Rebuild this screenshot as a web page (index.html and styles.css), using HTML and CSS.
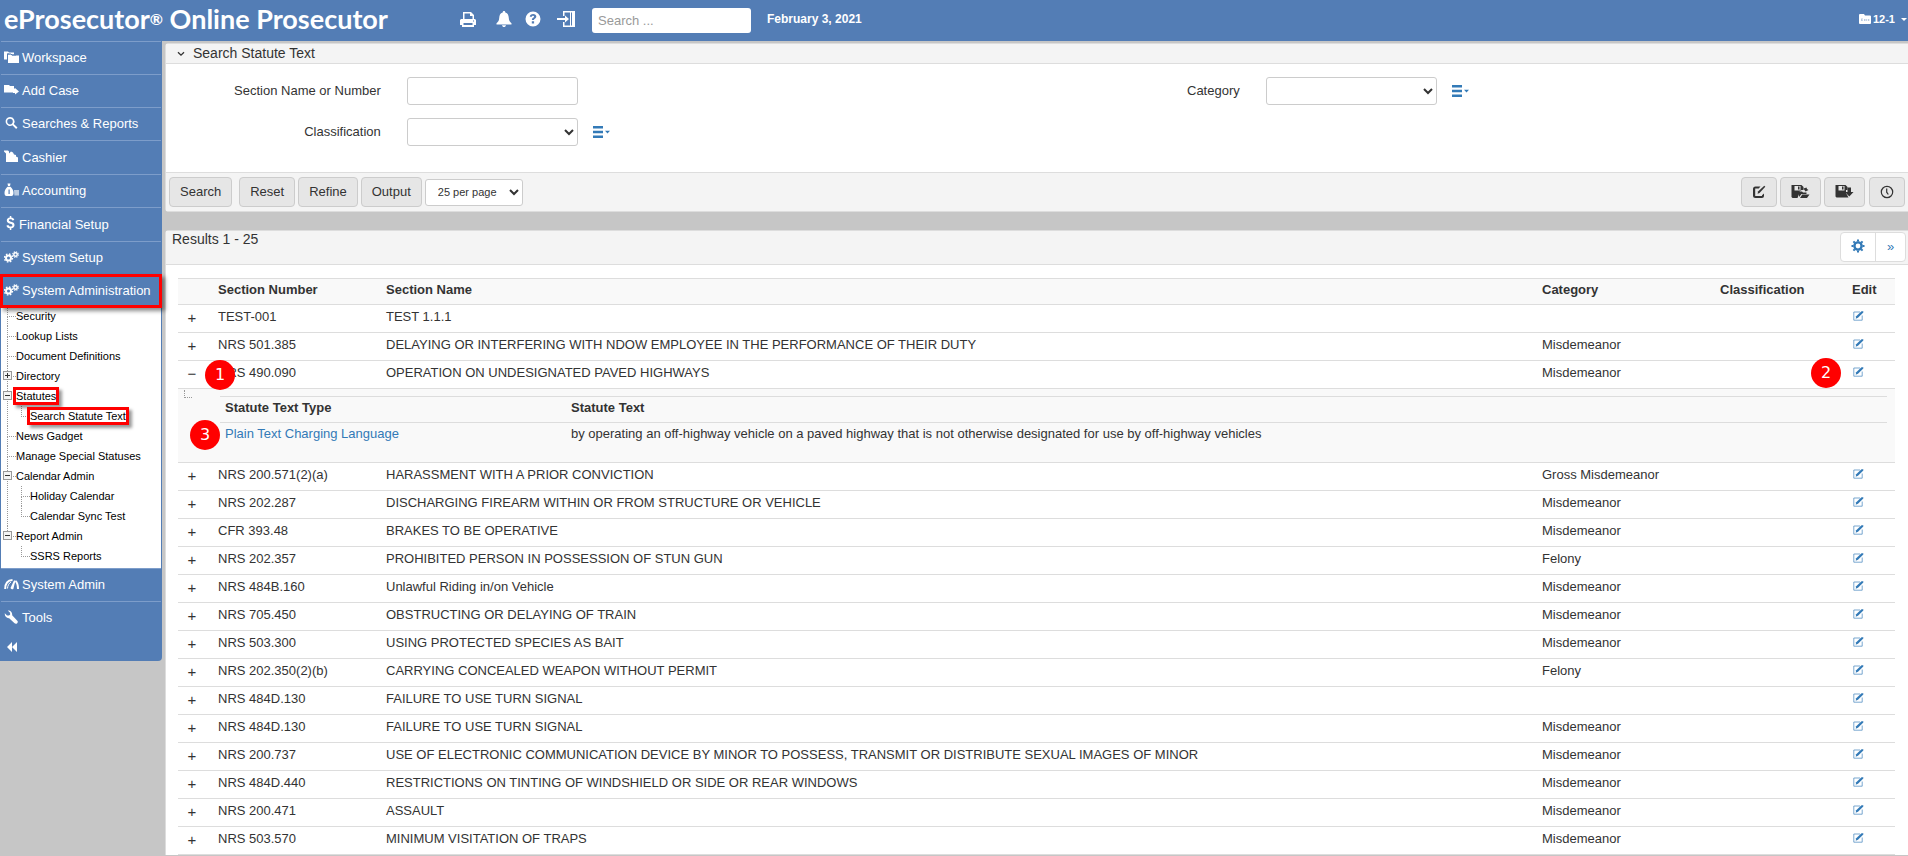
FILE: index.html
```html
<!DOCTYPE html>
<html lang="en">
<head>
<meta charset="utf-8">
<title>eProsecutor Online Prosecutor</title>
<link rel="stylesheet" href="styles.css">
</head>
<body>
<svg class="sprite" aria-hidden="true">
  <symbol id="i-print" viewBox="0 0 16 16"><path fill-rule="evenodd" d="M3 1h8l3 3v4h1l1 1v5h-2v2H2v-2H0V9l1-1h2zM4.500 2.500V8h8V5H10V2.500zM3.500 12v2h9v-2zM13 9.500v1h1v-1z"/></symbol>
  <symbol id="i-bell" viewBox="0 0 16 16"><path d="M8 0c1 0 1.300.7 1.300 1.400C12 2 12.600 4.500 12.800 7c.2 3 1.200 4 2.700 5.200V13.500H.5V12.200C2 11 3 10 3.200 7 3.400 4.500 4 2 6.700 1.400 6.700.7 7 0 8 0zM6 14.200h4C9.800 15.400 9 16 8 16s-1.800-.6-2-1.800z"/></symbol>
  <symbol id="i-help" viewBox="0 0 16 16"><path fill-rule="evenodd" d="M8 .5a7.500 7.500 0 1 1 0 15 7.500 7.500 0 0 1 0-15zM4.800 5.800h2.100c.1-.8.500-1.100 1.200-1.100.6 0 1 .3 1 .8 0 .6-.4.900-1 1.300-.8.5-1.200 1-1.200 2.200h2.100c0-.6.300-.9.900-1.300.8-.5 1.400-1.100 1.400-2.200C11.300 3.900 10 3 8.200 3 6.200 3 4.900 4 4.800 5.800zM6.800 10.200v2.200h2.300v-2.200z"/></symbol>
  <symbol id="i-login" viewBox="0 0 18 16"><path d="M6 0h12v16H6v-5h1.500v3.500H13l-.01-13H7.500V5H6zM0 7h8V4.500L12 8l-4 3.500V9H0z"/><path class="knock" d="M14 1.500h1v13h-1z"/></symbol>
  <symbol id="i-casefolder" viewBox="0 0 12 10"><path d="M0 1q0-1 1-1h4l1 1.500h5q1 0 1 1V9q0 1-1 1H1q-1 0-1-1z"/><path class="knock" d="M2 4.500h2v1H3v.7h1V7H2zM5 5h1.500v2H5zM7.200 5h1v2h-1zM9 5h1.300v2H9z" opacity=".4"/></symbol>
  <symbol id="i-folders" viewBox="0 0 15 13"><path d="M0 1h4l1 1h5v2H6L5 3H3v6H0z"/><path d="M4 4h3l1 1h7v7.500H4z" /><path d="M3.500 9V3.500H7L8 4.500h4" fill="none" class="knock-line"/></symbol>
  <symbol id="i-addcase" viewBox="0 0 15 12"><path d="M0 1h5l1 1h4v3l1-1 4 3.500-4 3V9H9v-.5H0z"/></symbol>
  <symbol id="i-search" viewBox="0 0 14 14"><path fill-rule="evenodd" d="M5.500 1a4.500 4.500 0 0 1 3.800 7l3.700 3.600-1.400 1.400L8 9.300A4.500 4.500 0 1 1 5.500 1zm0 1.800a2.800 2.800 0 1 0 0 5.600 2.800 2.800 0 0 0 0-5.600z"/></symbol>
  <symbol id="i-cashier" viewBox="0 0 15 13"><path d="M0 1h4l1 1v2l2-2 2 1 1 2 2 .5V7l2 1v4.500H2V4L0 2z"/></symbol>
  <symbol id="i-money" viewBox="0 0 15 13"><path fill-rule="evenodd" d="M3.500 0h3L6 2.500h-2zM3.500 3.200h3C8.500 5 9.500 7 9.500 9.500c0 2-.8 3-2 3h-5c-1.300 0-2-1-2-3C.5 7 1.500 5 3.500 3.200zM4.500 6v4.500h1.200V6z"/><path d="M10 6.500h5V12h-4.600z" opacity=".6"/></symbol>
  <symbol id="i-dollar" viewBox="0 0 10 14"><path d="M4.300 0h1.500v1.500c1.600.2 2.700 1 3 2.500l-2 .4c-.3-.8-.8-1.100-1.800-1.100-1 0-1.600.4-1.600 1 0 .8.700 1 2.200 1.400C7.700 6.200 9 7 9 9c0 1.800-1.200 3-3.200 3.300V14H4.300v-1.700C2.400 12.100 1.300 11.100 1 9.400l2-.4c.3 1 .9 1.500 2.100 1.500 1.100 0 1.800-.5 1.800-1.300 0-.9-.7-1.100-2.300-1.500C2.600 7.200 1.300 6.400 1.300 4.500c0-1.700 1.200-2.700 3-3z"/></symbol>
  <symbol id="i-cogs" viewBox="0 0 15 13"><circle cx="4.500" cy="7.500" r="2.500" fill="none" stroke="currentColor" stroke-width="2"/><circle cx="4.500" cy="7.500" r="4" fill="none" stroke="currentColor" stroke-width="1.400" stroke-dasharray="1.600 1.540"/><circle cx="11.500" cy="4" r="1.700" fill="none" stroke="currentColor" stroke-width="1.400"/><circle cx="11.500" cy="4" r="2.700" fill="none" stroke="currentColor" stroke-width="1.200" stroke-dasharray="1.200 .92"/></symbol>
  <symbol id="i-gauge" viewBox="0 0 15 12"><path fill="none" stroke="currentColor" stroke-width="2" d="M1.200 11C1.200 6 3.500 2.200 8.500 2M11.500 3c1.800 1.500 2.500 4 2.500 8"/><path fill="none" stroke="currentColor" d="M3.500 10.500C3.500 8 5 5 7 4"/><path d="M6.500 10 10 2.500h1.500L9.300 11q-1.800 1-2.800-1z"/></symbol>
  <symbol id="i-wrench" viewBox="0 0 15 15"><path d="M3.500.5 6 3v2L4.700 6h-2L.3 3.500C0 6.500 1.800 9 5 8.800L10.800 14.300c1 .8 2 .6 2.800-.2.800-.8.900-1.900.1-2.700L8.200 5.600C8.600 2.500 6.500 0 3.500.5z"/></symbol>
  <symbol id="i-back" viewBox="0 0 10 10"><path d="M5 0v10L0 5zM10 0v10L5 5z"/></symbol>
  <symbol id="i-chevron" viewBox="0 0 8 6"><path d="M1 1.200 4 4.200 7 1.200" fill="none" stroke="currentColor" stroke-width="1.300"/></symbol>
  <symbol id="i-list" viewBox="0 0 17 12"><path d="M0 0h10v2.500H0zM0 4.700h10v2.500H0zM0 9.400h10v2.500H0zM12 4.800h5L14.500 7.500z"/></symbol>
  <symbol id="i-compose" viewBox="0 0 14 14"><path d="M8.500 1.500H3.500q-2.500 0-2.500 2.500v6.500q0 2.500 2.500 2.500H10q2 0 2-2V8.500L10 10.300V11H3.200V3.600h3.500z"/><path d="M6 6.500 12.300.7l1 1L7.500 8 5.600 8.800z"/></symbol>
  <symbol id="i-saveopen" viewBox="0 0 18 14"><path fill-rule="evenodd" d="M0 0h10l2 2v3h-2L8 6.500V8L6 13H1L0 12zM3 1v4.500h6V1zM6.500 1.500h1.500v3H6.500z"/><path d="M7.500 12V6.500h3l1 1H15V9h-5zM8.500 13l2.300-3.400H18L15.500 13zM12 3.500l3-1 .5 1.500 1.500 1-3 1.500z"/></symbol>
  <symbol id="i-savedown" viewBox="0 0 18 14"><path fill-rule="evenodd" d="M0 0h10l2 2v3h-1.500v3L13 12.500H1L0 11.500zM3 1v4.500h6V1zM6.500 1.500h1.500v3H6.500z"/><path d="M12 2.500h3.500V7H18l-4.200 4.500L9.500 7H12z"/></symbol>
  <symbol id="i-clock" viewBox="0 0 14 14"><circle cx="7" cy="7" r="5.700" fill="none" stroke="currentColor" stroke-width="1.200"/><path d="M6.700 3.500V7.200l1.600 2.300" fill="none" stroke="currentColor" stroke-width="1.200"/></symbol>
  <symbol id="i-gear" viewBox="0 0 14 14"><circle cx="7" cy="7" r="3.600" fill="none" stroke="currentColor" stroke-width="2.400"/><path d="M7 .5v2M7 11.500v2M.5 7h2M11.500 7h2M2.400 2.400l1.400 1.400M10.200 10.200l1.400 1.400M2.400 11.600l1.400-1.400M10.200 3.800l1.400-1.400" stroke="currentColor" stroke-width="2"/></symbol>
  <symbol id="i-edit" viewBox="0 0 11 10"><path d="M7 1H.8v8.200h8.400V4.500" fill="none" stroke="currentColor" opacity=".65"/><path d="M3.200 5.300 8.500.3 10.300.2 10.300 1.500 5 6.800 2.700 7.800z"/></symbol>
</svg>

<header class="topbar">
  <h1 class="brand">eProsecutor<span class="reg">®</span> Online Prosecutor</h1>
  <nav class="tools" aria-label="Quick tools">
    <a href="#" class="tool" aria-label="Print"><svg class="ic16"><use href="#i-print"/></svg></a>
    <a href="#" class="tool tool-bell" aria-label="Alerts"><svg class="ic16"><use href="#i-bell"/></svg></a>
    <a href="#" class="tool" aria-label="Help"><svg class="ic16"><use href="#i-help"/></svg></a>
    <a href="#" class="tool tool-login" aria-label="Log out"><svg class="ic18"><use href="#i-login"/></svg></a>
  </nav>
  <input class="global-search" type="text" placeholder="Search ..." aria-label="Search">
  <span class="today">February 3, 2021</span>
  <a href="#" class="case-link"><svg class="ic-case"><use href="#i-casefolder"/></svg>12-1<span class="caret"></span></a>
</header>

<div class="page">
  <nav class="sidebar" aria-label="Main menu">
    <a class="item" href="#"><svg class="ico"><use href="#i-folders"/></svg>Workspace</a>
    <a class="item" href="#"><svg class="ico"><use href="#i-addcase"/></svg>Add Case</a>
    <a class="item" href="#"><svg class="ico"><use href="#i-search"/></svg>Searches &amp; Reports</a>
    <a class="item tall" href="#"><svg class="ico"><use href="#i-cashier"/></svg>Cashier</a>
    <a class="item" href="#"><svg class="ico"><use href="#i-money"/></svg>Accounting</a>
    <a class="item tall" href="#"><svg class="ico narrow"><use href="#i-dollar"/></svg>Financial Setup</a>
    <a class="item" href="#"><svg class="ico"><use href="#i-cogs"/></svg>System Setup</a>
    <a class="item marked" href="#"><svg class="ico"><use href="#i-cogs"/></svg>System Administration</a>
    <ul class="tree">
      <li><a href="#">Security</a></li>
      <li><a href="#">Lookup Lists</a></li>
      <li><a href="#">Document Definitions</a></li>
      <li><button class="toggle plus" aria-label="Expand Directory"></button><a href="#">Directory</a></li>
      <li><button class="toggle" aria-label="Collapse Statutes"></button><a href="#" class="boxed">Statutes</a>
        <ul><li><a href="#" class="boxed">Search Statute Text</a></li></ul></li>
      <li><a href="#">News Gadget</a></li>
      <li><a href="#">Manage Special Statuses</a></li>
      <li><button class="toggle" aria-label="Collapse Calendar Admin"></button><a href="#">Calendar Admin</a>
        <ul><li><a href="#">Holiday Calendar</a></li><li><a href="#">Calendar Sync Test</a></li></ul></li>
      <li><button class="toggle" aria-label="Collapse Report Admin"></button><a href="#">Report Admin</a>
        <ul><li><a href="#">SSRS Reports</a></li></ul></li>
    </ul>
    <a class="item" href="#"><svg class="ico"><use href="#i-gauge"/></svg>System Admin</a>
    <a class="item plain" href="#"><svg class="ico"><use href="#i-wrench"/></svg>Tools</a>
    <button class="collapse" aria-label="Collapse menu"><svg class="ic10"><use href="#i-back"/></svg></button>
  </nav>

  <main class="main">
    <section class="panel">
      <h2 class="panel-head"><svg class="ic8"><use href="#i-chevron"/></svg>Search Statute Text</h2>
      <form class="form">
        <div class="field"><label for="sec">Section Name or Number</label><input id="sec" class="control" type="text"></div>
        <div class="field"><label for="cat">Category</label><select id="cat" class="control"><option></option></select><a href="#" class="pick" aria-label="Category options"><svg class="ic-list"><use href="#i-list"/></svg></a></div>
        <div class="field"><label for="cls">Classification</label><select id="cls" class="control"><option></option></select><a href="#" class="pick" aria-label="Classification options"><svg class="ic-list"><use href="#i-list"/></svg></a></div>
      </form>
      <div class="actions">
        <button class="btn first">Search</button>
        <button class="btn">Reset</button>
        <button class="btn">Refine</button>
        <button class="btn">Output</button>
        <select class="per-page" aria-label="Results per page"><option>25 per page</option></select>
        <span class="spacer"></span>
        <button class="btn icon" aria-label="New"><svg class="ic14"><use href="#i-compose"/></svg></button>
        <button class="btn icon" aria-label="Open saved search"><svg class="ic-save"><use href="#i-saveopen"/></svg></button>
        <button class="btn icon" aria-label="Save search"><svg class="ic-save"><use href="#i-savedown"/></svg></button>
        <button class="btn icon" aria-label="History"><svg class="ic14"><use href="#i-clock"/></svg></button>
      </div>
    </section>

    <section class="panel results">
      <div class="results-head">
        <h2>Results 1 - 25</h2>
        <div class="group"><button aria-label="Settings"><svg class="ic14"><use href="#i-gear"/></svg></button><button aria-label="Next page">»</button></div>
      </div>
      <table class="grid">
        <colgroup><col class="c-exp"><col class="c-num"><col><col class="c-cat"><col class="c-cls"><col class="c-edit"></colgroup>
        <thead><tr><th></th><th>Section Number</th><th>Section Name</th><th>Category</th><th>Classification</th><th>Edit</th></tr></thead>
        <tbody>
          <tr><td><button class="exp">+</button></td><td>TEST-001</td><td>TEST 1.1.1</td><td></td><td></td><td><a href="#" class="edit" aria-label="Edit"><svg><use href="#i-edit"/></svg></a></td></tr>
          <tr><td><button class="exp">+</button></td><td>NRS 501.385</td><td>DELAYING OR INTERFERING WITH NDOW EMPLOYEE IN THE PERFORMANCE OF THEIR DUTY</td><td>Misdemeanor</td><td></td><td><a href="#" class="edit" aria-label="Edit"><svg><use href="#i-edit"/></svg></a></td></tr>
          <tr><td><button class="exp">−</button></td><td class="pin"><span class="badge b1">1</span>NRS 490.090</td><td>OPERATION ON UNDESIGNATED PAVED HIGHWAYS</td><td>Misdemeanor</td><td></td><td class="pin"><span class="badge b2">2</span><a href="#" class="edit" aria-label="Edit"><svg><use href="#i-edit"/></svg></a></td></tr>
          <tr class="detail"><td><span class="elbow"></span></td><td colspan="5">
            <table class="sub">
              <colgroup><col class="c-type"><col></colgroup>
              <thead><tr><th>Statute Text Type</th><th>Statute Text</th></tr></thead>
              <tbody><tr><td class="pin"><span class="badge b3">3</span><a href="#" class="link">Plain Text Charging Language</a></td><td>by operating an off-highway vehicle on a paved highway that is not otherwise designated for use by off-highway vehicles</td></tr></tbody>
            </table></td></tr>
          <tr><td><button class="exp">+</button></td><td>NRS 200.571(2)(a)</td><td>HARASSMENT WITH A PRIOR CONVICTION</td><td>Gross Misdemeanor</td><td></td><td><a href="#" class="edit" aria-label="Edit"><svg><use href="#i-edit"/></svg></a></td></tr>
          <tr><td><button class="exp">+</button></td><td>NRS 202.287</td><td>DISCHARGING FIREARM WITHIN OR FROM STRUCTURE OR VEHICLE</td><td>Misdemeanor</td><td></td><td><a href="#" class="edit" aria-label="Edit"><svg><use href="#i-edit"/></svg></a></td></tr>
          <tr><td><button class="exp">+</button></td><td>CFR 393.48</td><td>BRAKES TO BE OPERATIVE</td><td>Misdemeanor</td><td></td><td><a href="#" class="edit" aria-label="Edit"><svg><use href="#i-edit"/></svg></a></td></tr>
          <tr><td><button class="exp">+</button></td><td>NRS 202.357</td><td>PROHIBITED PERSON IN POSSESSION OF STUN GUN</td><td>Felony</td><td></td><td><a href="#" class="edit" aria-label="Edit"><svg><use href="#i-edit"/></svg></a></td></tr>
          <tr><td><button class="exp">+</button></td><td>NRS 484B.160</td><td>Unlawful Riding in/on Vehicle</td><td>Misdemeanor</td><td></td><td><a href="#" class="edit" aria-label="Edit"><svg><use href="#i-edit"/></svg></a></td></tr>
          <tr><td><button class="exp">+</button></td><td>NRS 705.450</td><td>OBSTRUCTING OR DELAYING OF TRAIN</td><td>Misdemeanor</td><td></td><td><a href="#" class="edit" aria-label="Edit"><svg><use href="#i-edit"/></svg></a></td></tr>
          <tr><td><button class="exp">+</button></td><td>NRS 503.300</td><td>USING PROTECTED SPECIES AS BAIT</td><td>Misdemeanor</td><td></td><td><a href="#" class="edit" aria-label="Edit"><svg><use href="#i-edit"/></svg></a></td></tr>
          <tr><td><button class="exp">+</button></td><td>NRS 202.350(2)(b)</td><td>CARRYING CONCEALED WEAPON WITHOUT PERMIT</td><td>Felony</td><td></td><td><a href="#" class="edit" aria-label="Edit"><svg><use href="#i-edit"/></svg></a></td></tr>
          <tr><td><button class="exp">+</button></td><td>NRS 484D.130</td><td>FAILURE TO USE TURN SIGNAL</td><td></td><td></td><td><a href="#" class="edit" aria-label="Edit"><svg><use href="#i-edit"/></svg></a></td></tr>
          <tr><td><button class="exp">+</button></td><td>NRS 484D.130</td><td>FAILURE TO USE TURN SIGNAL</td><td>Misdemeanor</td><td></td><td><a href="#" class="edit" aria-label="Edit"><svg><use href="#i-edit"/></svg></a></td></tr>
          <tr><td><button class="exp">+</button></td><td>NRS 200.737</td><td>USE OF ELECTRONIC COMMUNICATION DEVICE BY MINOR TO POSSESS, TRANSMIT OR DISTRIBUTE SEXUAL IMAGES OF MINOR</td><td>Misdemeanor</td><td></td><td><a href="#" class="edit" aria-label="Edit"><svg><use href="#i-edit"/></svg></a></td></tr>
          <tr><td><button class="exp">+</button></td><td>NRS 484D.440</td><td>RESTRICTIONS ON TINTING OF WINDSHIELD OR SIDE OR REAR WINDOWS</td><td>Misdemeanor</td><td></td><td><a href="#" class="edit" aria-label="Edit"><svg><use href="#i-edit"/></svg></a></td></tr>
          <tr><td><button class="exp">+</button></td><td>NRS 200.471</td><td>ASSAULT</td><td>Misdemeanor</td><td></td><td><a href="#" class="edit" aria-label="Edit"><svg><use href="#i-edit"/></svg></a></td></tr>
          <tr><td><button class="exp">+</button></td><td>NRS 503.570</td><td>MINIMUM VISITATION OF TRAPS</td><td>Misdemeanor</td><td></td><td><a href="#" class="edit" aria-label="Edit"><svg><use href="#i-edit"/></svg></a></td></tr>
        </tbody>
      </table>
    </section>
  </main>
</div>
</body>
</html>
```

FILE: styles.css
```css
:root {
  --blue: #537db5;
  --blue-line: #7d9dca;
  --gray: #c6c6c6;
  --line: #dddddd;
  --text: #333333;
  --link: #337ab7;
}
* { box-sizing: border-box; }
body {
  margin: 0;
  background: var(--gray);
  color: var(--text);
  font: 13px/20px "Liberation Sans", Arial, sans-serif;
}
a { color: inherit; text-decoration: none; }
button, input, select { font: inherit; color: inherit; }
button { cursor: pointer; }
svg { display: block; fill: currentColor; flex: none; }
.sprite { position: absolute; width: 0; height: 0; }
.knock { fill: var(--blue); }
.knock-line { stroke: var(--blue); stroke-width: 1; }
.ic8 { width: 8px; height: 6px; }
.ic10 { width: 10px; height: 10px; }
.ic14 { width: 14px; height: 14px; }
.ic16 { width: 16px; height: 16px; }
.ic18 { width: 18px; height: 16px; }
.ic-save { width: 19px; height: 14px; }
.ic-list { width: 17px; height: 12px; }
.ic-case { width: 12px; height: 10px; }

/* Top bar */
.topbar {
  display: flex;
  align-items: center;
  height: 41px;
  padding: 0 1px 3px 4px;
  background: var(--blue);
  color: #fff;
}
.brand { margin: 0; width: 456px; font: 700 27px/36px Lato, sans-serif; white-space: nowrap; }
.reg { font-size: 16px; vertical-align: 4px; line-height: 1; }
.tools { display: flex; align-items: center; }
.tool-bell { margin: 0 13px 0 20px; }
.tool-login { margin: 0 17px 0 16px; }
.global-search {
  width: 159px;
  height: 25px;
  margin-top: 2px;
  padding: 0 6px;
  border: 0;
  border-radius: 3px;
  background: #fff;
  color: var(--text);
}
.global-search::placeholder { color: #999; }
.today { margin-left: 16px; font-weight: 700; font-size: 12px; }
.case-link { display: flex; align-items: center; gap: 2px; margin-left: auto; font-weight: 700; font-size: 11px; }
.caret { margin-left: 4px; border: 3px solid transparent; border-top-color: #fff; border-bottom: 0; }

/* Page */
.page { display: flex; align-items: flex-start; gap: 3px; }

/* Sidebar */
.sidebar {
  flex: none;
  width: 162px;
  padding: 0 1px;
  background: var(--blue);
  color: #fff;
  border-radius: 0 0 4px 0;
}
.item {
  display: flex;
  align-items: center;
  gap: 3px;
  height: 33px;
  padding-left: 3px;
  border-top: 1px solid var(--blue-line);
  white-space: nowrap;
}
.item.tall { height: 34px; }
.ico { width: 15px; height: 14px; margin-bottom: 3px; }
.ico.narrow { width: 11px; margin-left: 1px; }
.item.marked {
  position: relative;
  z-index: 2;
  height: 34px;
  margin: 0 -1px -2px;
  padding-left: 1px;
  border: 3px solid #f00;
  box-shadow: 3px 3px 4px rgba(0, 0, 0, .45);
}
.collapse { display: flex; align-items: center; height: 27px; padding: 0 0 2px 6px; border: 0; background: none; color: #fff; }
.tree, .tree ul { margin: 0; padding: 0; list-style: none; }
.sidebar > .tree {
  padding-bottom: 2px;
  background: #fff;
  color: #000;
  font-size: 11px;
}
.tree li { position: relative; padding-left: 15px; line-height: 20px; white-space: nowrap; }
.tree li::before {
  content: "";
  position: absolute;
  left: 6px;
  top: 0;
  width: 8px;
  height: 10px;
  border-left: 1px dotted #999;
  border-bottom: 1px dotted #999;
}
.tree li:not(:last-child)::after {
  content: "";
  position: absolute;
  left: 6px;
  top: 10px;
  bottom: 0;
  border-left: 1px dotted #999;
}
.tree ul { margin-left: -1px; }
.toggle {
  position: absolute;
  z-index: 1;
  left: 2px;
  top: 5px;
  width: 9px;
  height: 9px;
  padding: 0;
  border: 1px solid #999;
  background: linear-gradient(#333, #333) center / 5px 1px no-repeat #f4f4f4;
}
.toggle.plus { background: linear-gradient(#333, #333) center / 5px 1px no-repeat, linear-gradient(#333, #333) center / 1px 5px no-repeat, #f4f4f4; }
.tree a { display: block; width: fit-content; }
.tree .boxed {
  position: relative;
  z-index: 2;
  line-height: 14px;
  border-block: 3px solid transparent;
  background-clip: padding-box;
}
.tree .boxed::after {
  content: "";
  position: absolute;
  inset: -2px -3px;
  border: 3px solid #f00;
  box-shadow: 3px 3px 3px rgba(0, 0, 0, .4);
}

/* Panels */
.main { flex: 1; min-width: 0; padding-top: 2px; }
.panel { background: #fff; border: 1px solid var(--line); border-right: 0; border-radius: 4px 0 0 4px; }
.panel h2 { margin: 0; font-size: 14px; font-weight: 400; line-height: 20px; }
.panel .panel-head {
  display: flex;
  align-items: center;
  gap: 8px;
  padding-left: 11px;
  background: #f4f4f4;
  border-bottom: 1px solid var(--line);
  line-height: 19px;
}
.form {
  display: grid;
  grid-template-columns: 1fr 1fr;
  row-gap: 13px;
  padding: 13px 24px 26px 0;
}
.field { display: flex; align-items: center; }
.field label { width: 25%; text-align: right; }
.control {
  width: 171px;
  height: 28px;
  margin-left: 26px;
  padding: 0 6px;
  border: 1px solid #ccc;
  border-radius: 3px;
  background: #fff;
}
.pick { margin-left: 15px; color: var(--link); }
.actions {
  display: flex;
  align-items: center;
  gap: 3px;
  padding: 4px 3px;
  background: #f4f4f4;
  border-top: 1px solid var(--line);
}
.btn {
  height: 30px;
  padding: 0 10px;
  border: 1px solid #ccc;
  border-radius: 4px;
  background: #e6e6e6;
}
.btn.first { margin-right: 4px; }
.btn.icon:last-child { margin-left: 1px; }
.per-page {
  width: 98px;
  height: 27px;
  padding: 0 8px;
  border: 1px solid #ccc;
  border-radius: 3px;
  background: #fff;
  font-size: 11px;
}
.spacer { flex: 1; }

/* Results */
.results { margin-top: 18px; border-bottom: 0; border-bottom-left-radius: 0; }
.results-head {
  display: flex;
  justify-content: space-between;
  align-items: flex-start;
  height: 34px;
  padding: 0 2px 0 6px;
  background: #f4f4f4;
  border-bottom: 1px solid var(--line);
}
.results-head h2 { line-height: 16px; }
.group { display: flex; margin-top: 1px; border: 1px solid var(--line); border-radius: 4px; background: #fff; }
.group button {
  display: grid;
  place-items: center;
  height: 28px;
  width: 34px;
  padding: 0 0 2px;
  border: 0;
  background: none;
  color: var(--link);
}
.group button + button { width: 30px; padding: 0; border-left: 1px solid var(--line); }
table { width: 100%; border-collapse: separate; border-spacing: 0; table-layout: fixed; text-align: left; }
.results > .grid { width: auto; min-width: calc(100% - 25px); margin: 13px 13px 0 12px; border-bottom: 1px solid var(--line); }
.grid th, .grid td { padding: 1px 4px 4px; border-top: 1px solid var(--line); vertical-align: top; }
.grid td { padding-top: 2px; padding-bottom: 5px; }
.grid th { background: #f9f9f9; font-weight: 700; }
.c-exp { width: 36px; }
.c-num { width: 168px; }
.c-cat { width: 178px; }
.c-cls { width: 132px; }
.c-edit { width: 47px; }
.c-type { width: 346px; }
.exp {
  display: block;
  width: 20px;
  height: 20px;
  margin-top: 1px;
  margin-bottom: -1px;
  padding: 0;
  border: 0;
  background: none;
  font-size: 15px;
}
.edit { display: flex; align-items: center; height: 17px; padding-left: 1px; color: var(--link); }
.edit svg { width: 11px; height: 10px; }
.grid .detail > td { padding: 7px 8px 14px 6px; background: #f9f9f9; }
.elbow { display: block; width: 8px; height: 8px; margin-top: -6px; border-left: 1px dotted #999; border-bottom: 1px dotted #999; }
.sub th, .grid .sub td { padding-left: 5px; }
.grid .sub td { padding-top: 1px; padding-bottom: 4px; }
.link { color: var(--link); }

/* Numbered call-outs */
.pin { position: relative; }
.badge {
  position: absolute;
  z-index: 3;
  width: 30px;
  height: 30px;
  border-radius: 50%;
  background: #f00;
  color: #fff;
  font: 16px/29px "DejaVu Sans", sans-serif;
  text-align: center;
}
.b1 { left: -9px; top: -1px; }
.b2 { left: -37px; top: -3px; }
.b3 { left: -30px; top: -3px; }
```
